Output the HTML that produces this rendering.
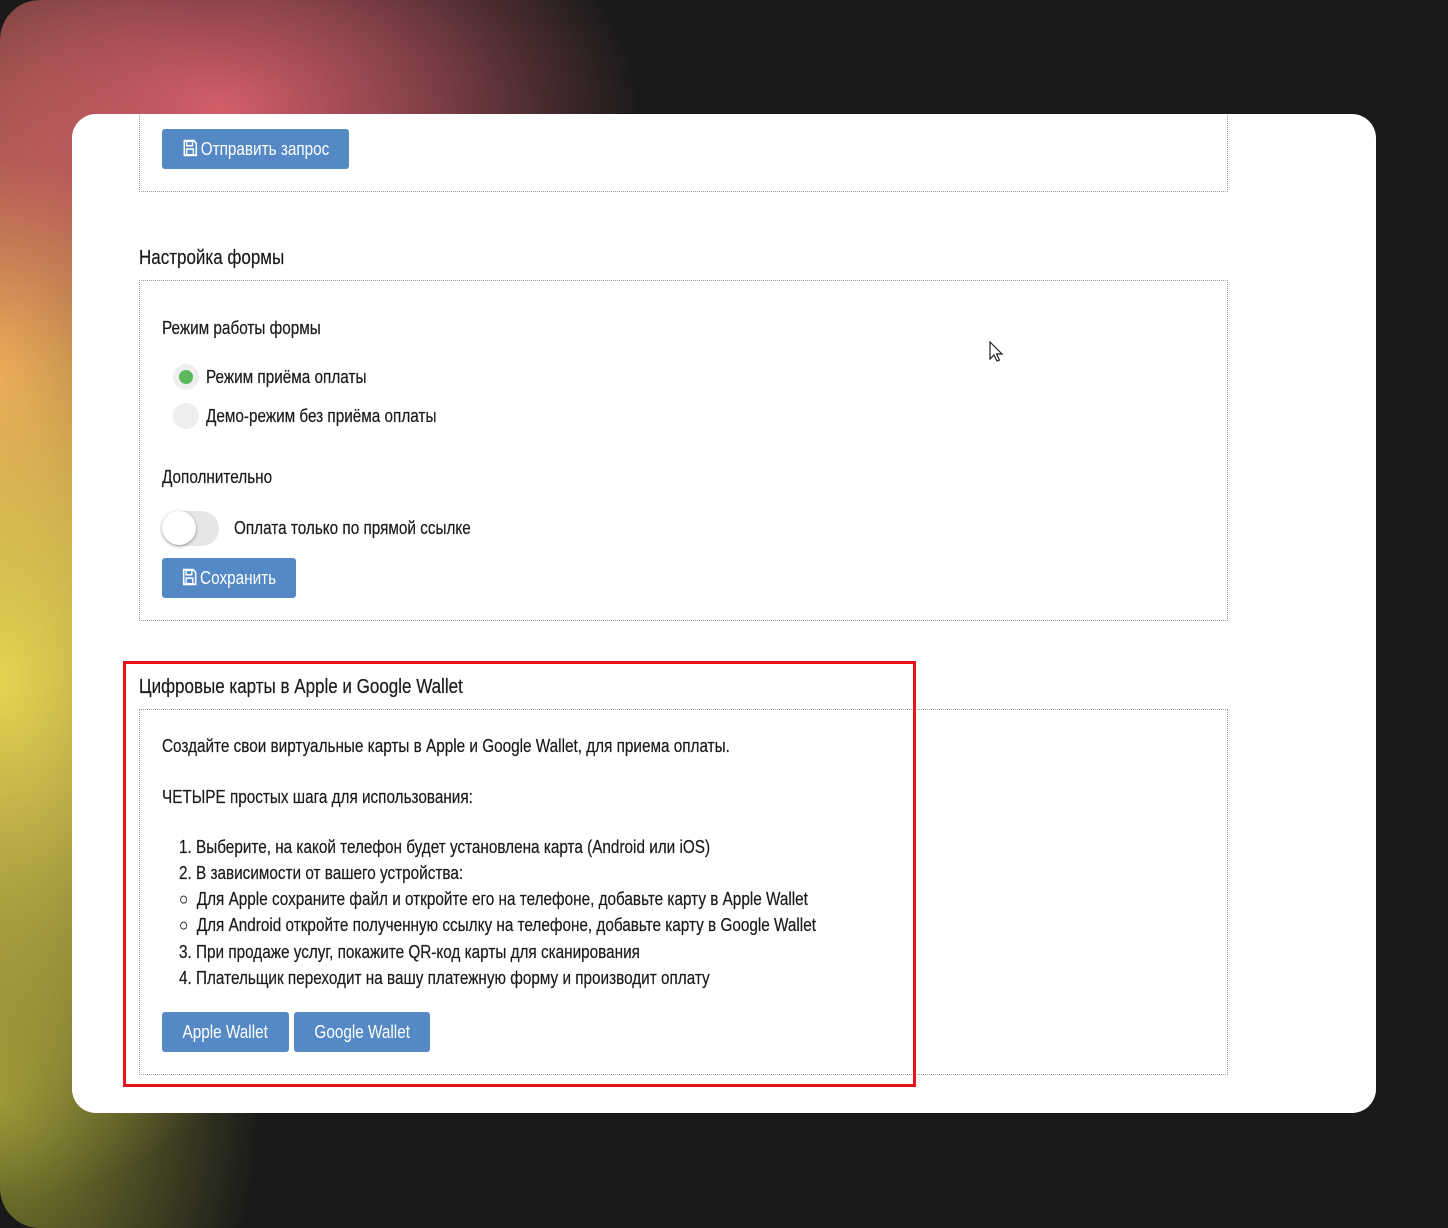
<!DOCTYPE html>
<html><head><meta charset="utf-8"><style>
*{margin:0;padding:0;box-sizing:border-box}
body{width:1448px;height:1228px;overflow:hidden;background:#1a1a1a;font-family:"Liberation Sans",sans-serif;color:#1a1a1a;font-size:18px}
.outer{position:absolute;left:0;top:0;width:1448px;height:1228px;border-radius:40px;overflow:hidden;background:
radial-gradient(ellipse 380px 520px at 0px 680px,#e4d452 0%,rgba(228,212,82,.7) 35%,rgba(228,212,82,0) 100%),
radial-gradient(ellipse 420px 260px at 220px 110px,#d45e6a 0%,rgba(212,94,106,.6) 45%,rgba(212,94,106,0) 100%),
radial-gradient(ellipse 300px 500px at 0px 380px,#f08a60 0%,rgba(240,138,96,0) 100%),
radial-gradient(ellipse 260px 360px at 0px 1100px,#8a8a30 0%,rgba(138,138,48,0) 100%),
#1a1a1a}
.card{position:absolute;left:72px;top:114px;width:1304px;height:999px;background:#fff;border-radius:24px;overflow:hidden}
.fs{position:absolute;border:1px dotted #999}
.t{position:absolute;white-space:nowrap;line-height:20px;transform:scaleX(.85);transform-origin:0 0;-webkit-text-stroke:.2px #1a1a1a}
.btn{position:absolute;background:#5589c6;color:#fff;border-radius:3px;height:40px;line-height:40px;text-align:center;white-space:nowrap;font-size:18px}
.btn span{display:inline-block;transform:scaleX(.85)}
.ic{display:inline-block;vertical-align:-2px;margin-right:3px}
</style></head><body><div class="outer">
<div class="card">
<div class="fs" style="left:67px;top:-10px;width:1089px;height:88px;border-top:none"></div>
<div class="btn" style="left:90px;top:15px;width:187px"><span><svg class="ic" width="19" height="18" viewBox="0 0 16 16"><path d="M2 1.5h10l2.5 2.5v10.5h-12.5z" fill="none" stroke="#fff" stroke-width="1.6"/><rect x="4.5" y="2" width="6" height="4" fill="none" stroke="#fff" stroke-width="1.4"/><rect x="4.5" y="9" width="7" height="5" fill="none" stroke="#fff" stroke-width="1.4"/></svg>Отправить запрос</span></div>

<div class="t" style="left:67px;top:134px;font-size:20px">Настройка формы</div>
<div class="fs" style="left:67px;top:166px;width:1089px;height:341px"></div>
<div class="t" style="left:90px;top:204px">Режим работы формы</div>
<div style="position:absolute;left:101px;top:250px;width:26px;height:26px;border-radius:50%;background:#eee"></div>
<div style="position:absolute;left:107px;top:256px;width:14px;height:14px;border-radius:50%;background:#5cb85c"></div>
<div class="t" style="left:134px;top:253px">Режим приёма оплаты</div>
<div style="position:absolute;left:101px;top:289px;width:26px;height:26px;border-radius:50%;background:#eee"></div>
<div class="t" style="left:134px;top:292px">Демо-режим без приёма оплаты</div>
<div class="t" style="left:90px;top:353px">Дополнительно</div>
<div style="position:absolute;left:90px;top:397px;width:57px;height:35px;border-radius:18px;background:#e6e6e6"></div>
<div style="position:absolute;left:90px;top:397px;width:34px;height:34px;border-radius:50%;background:#fff;box-shadow:0 1px 3px rgba(0,0,0,.4)"></div>
<div class="t" style="left:162px;top:404px">Оплата только по прямой ссылке</div>
<div class="btn" style="left:90px;top:444px;width:134px"><span><svg class="ic" width="19" height="18" viewBox="0 0 16 16"><path d="M2 1.5h10l2.5 2.5v10.5h-12.5z" fill="none" stroke="#fff" stroke-width="1.6"/><rect x="4.5" y="2" width="6" height="4" fill="none" stroke="#fff" stroke-width="1.4"/><rect x="4.5" y="9" width="7" height="5" fill="none" stroke="#fff" stroke-width="1.4"/></svg>Сохранить</span></div>

<svg style="position:absolute;left:917px;top:227px" width="16" height="22" viewBox="0 0 16 22"><path d="M1 1v17l4-4 3 6 2.5-1-3-6h5.5z" fill="#fff" stroke="#222" stroke-width="1.2"/></svg>

<div class="t" style="left:67px;top:563px;font-size:20px">Цифровые карты в Apple и Google Wallet</div>
<div class="fs" style="left:67px;top:595px;width:1089px;height:366px"></div>
<div class="t" style="left:90px;top:622px">Создайте свои виртуальные карты в Apple и Google Wallet, для приема оплаты.</div>
<div class="t" style="left:90px;top:673px">ЧЕТЫРЕ простых шага для использования:</div>
<div class="t" style="left:107px;top:723px">1. Выберите, на какой телефон будет установлена карта (Android или iOS)</div>
<div class="t" style="left:107px;top:749px">2. В зависимости от вашего устройства:</div>
<div class="t" style="left:107px;top:775px">○ &nbsp;Для Apple сохраните файл и откройте его на телефоне, добавьте карту в Apple Wallet</div>
<div class="t" style="left:107px;top:801px">○ &nbsp;Для Android откройте полученную ссылку на телефоне, добавьте карту в Google Wallet</div>
<div class="t" style="left:107px;top:828px">3. При продаже услуг, покажите QR-код карты для сканирования</div>
<div class="t" style="left:107px;top:854px">4. Плательщик переходит на вашу платежную форму и производит оплату</div>
<div class="btn" style="left:90px;top:898px;width:127px"><span>Apple Wallet</span></div>
<div class="btn" style="left:222px;top:898px;width:136px"><span>Google Wallet</span></div>
</div>
<div style="position:absolute;left:123px;top:661px;width:793px;height:426px;border:3px solid #e8141c"></div>
</div></body></html>
